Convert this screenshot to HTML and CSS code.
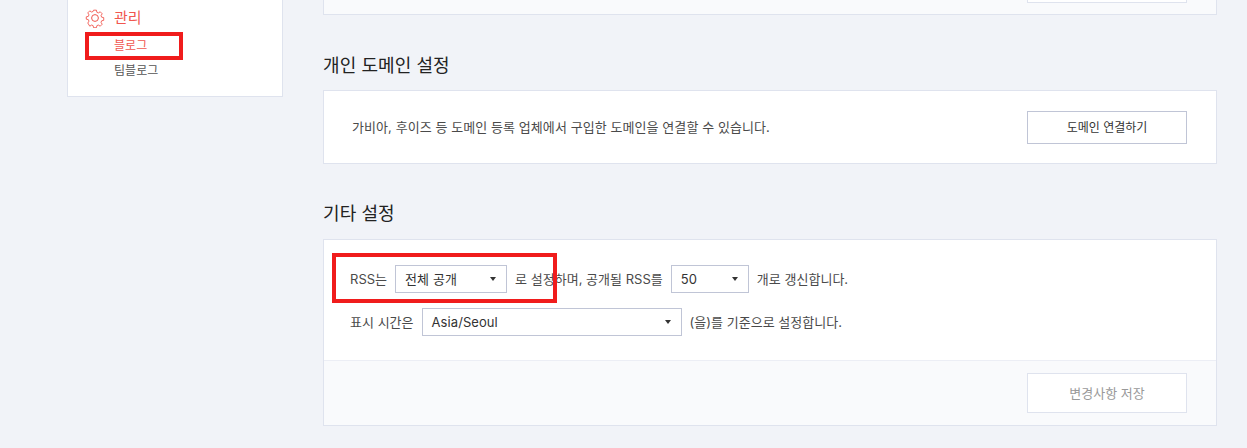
FILE: index.html
```html
<!DOCTYPE html>
<html lang="ko">
<head>
<meta charset="utf-8">
<title>블로그 설정</title>
<link rel="stylesheet" href="styles.css">
</head>
<body>
<div class="page">
  <aside class="side">
    <div class="menu-head">
      <svg class="gear" width="20" height="20" viewBox="0 0 20 20" fill="none" stroke="#f0574f" stroke-width="1">
        <circle cx="10" cy="10" r="3.4"/>
        <path d="M8.4 1.3h3.2l.5 2.4 1.6.7 2.1-1.3 2.2 2.2-1.3 2.1.7 1.7 2.3.5v3l-2.3.5-.7 1.7 1.3 2.1-2.2 2.2-2.1-1.3-1.6.7-.5 2.3H8.4l-.5-2.3-1.6-.7-2.1 1.3L2 15.6l1.3-2.1-.7-1.7L.3 11.300V8.700l2.300-.5.700-1.700L2 4.300l2.200-2.200 2.100 1.300 1.600-.7z" transform="translate(1 1) scale(.9)"/>
      </svg>
      <span class="menu-title">관리</span>
    </div>
    <a class="sub active">블로그</a>
    <a class="sub">팀블로그</a>
  </aside>
  <main class="main">
    <div class="card card-cut">
      <div class="foot foot-cut"><span class="btn btn-off btn-cut"></span></div>
    </div>
    <h2 class="title title-first">개인 도메인 설정</h2>
    <div class="card">
      <div class="row-domain">
        <p class="desc">가비아, 후이즈 등 도메인 등록 업체에서 구입한 도메인을 연결할 수 있습니다.</p>
        <button class="btn">도메인 연결하기</button>
      </div>
    </div>
    <h2 class="title">기타 설정</h2>
    <div class="card">
      <div class="form">
        <div class="line">
          <span class="txt">RSS는</span>
          <span class="sel sel-rss">전체 공개<i class="caret"></i></span>
          <span class="txt">로 설정하며, 공개될 RSS를</span>
          <span class="sel sel-num">50<i class="caret"></i></span>
          <span class="txt">개로 갱신합니다.</span>
        </div>
        <div class="line">
          <span class="txt">표시 시간은</span>
          <span class="sel sel-tz">Asia/Seoul<i class="caret"></i></span>
          <span class="txt">(을)를 기준으로 설정합니다.</span>
        </div>
      </div>
      <div class="foot"><button class="btn btn-off">변경사항 저장</button></div>
    </div>
  </main>
</div>
<div class="mark mark-menu"></div>
<div class="mark mark-rss"></div>
</body>
</html>
```
FILE: styles.css
```css
* { box-sizing: border-box; }
html, body { margin: 0; height: 448px; overflow: hidden; }
body {
  background: #f1f3f8;
  color: #333;
  font-family: Inter, "Noto Sans CJK KR", sans-serif;
  font-size: 13px;
  letter-spacing: .07px;
  position: relative;
}
.page { display: flex; align-items: flex-start; padding-left: 67px; }
.side {
  width: 216px;
  height: 97px;
  background: #fff;
  border: 1px solid #dfe3ee;
  border-top: 0;
  padding: 8px 0 0 17px;
}
.menu-head { display: flex; align-items: center; gap: 9px; height: 20px; }
.gear { display: block; }
.menu-title { font-size: 15px; color: #f0574f; line-height: 20px; }
.sub { display: block; margin-left: 29px; font-size: 12px; line-height: 18px; color: #555; }
.active { color: #f0574f; margin-top: 9px; margin-bottom: 7px; }
.main { width: 894px; margin-left: 40px; }
.card { background: #fff; border: 1px solid #dfe3ee; }
.card-cut { border-top: 0; height: 15px; }
.foot {
  display: flex;
  justify-content: flex-end;
  padding: 12px 29px 12px 0;
  background: #f9fafc;
  border-top: 1px solid #eceef5;
}
.foot-cut { border-top: 0; padding: 0 29px 0 0; height: 14px; }
.title { margin: 0; font-size: 18px; font-weight: 400; line-height: 26px; color: #222; padding: 37px 0 12px; }
.title-first { padding: 38px 0 11px; }
.row-domain {
  display: flex;
  justify-content: space-between;
  align-items: center;
  height: 72px;
  padding: 0 29px 0 28px;
}
.desc { margin: 0 0 1px; font-size: 13px; color: #4a4a4a; }
.btn {
  width: 160px;
  height: 33px;
  padding: 0 0 2px;
  background: #fff;
  border: 1px solid #c0c5d6;
  font: inherit;
  font-size: 12px;
  color: #333;
}
.btn-off { height: 40px; border-color: #dfe3ee; color: #999; font-size: 13px; }
.btn-cut { display: block; height: 1px; border-top: 0; }
.form { height: 120px; padding: 25px 0 0 26px; display: flex; flex-direction: column; gap: 15px; }
.line { display: flex; align-items: center; gap: 8px; height: 28px; font-size: 13px; color: #4a4a4a; letter-spacing: .02px; }
.txt { margin-bottom: 2px; }
.sel {
  display: flex;
  align-items: center;
  justify-content: space-between;
  height: 28px;
  padding: 0 10px 1px 9px;
  background: #fff;
  border: 1px solid #c0c5d6;
  color: #333;
  letter-spacing: .07px;
}
.sel-rss { width: 112px; }
.sel-num { width: 78px; }
.sel-tz { width: 260px; }
.caret {
  width: 0;
  height: 0;
  border-left: 3.5px solid transparent;
  border-right: 3.5px solid transparent;
  border-top: 4px solid #333;
}
.mark { position: absolute; border: 4px solid #f01c1c; }
.mark-menu { left: 85px; top: 32px; width: 98px; height: 28px; }
.mark-rss { left: 332px; top: 253px; width: 225px; height: 50px; }
```
